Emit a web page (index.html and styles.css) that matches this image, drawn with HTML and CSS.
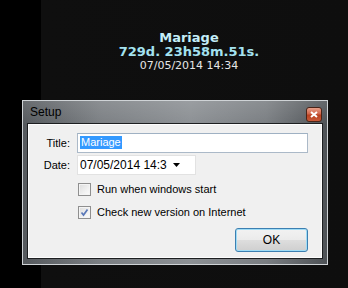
FILE: index.html
```html
<!DOCTYPE html>
<html>
<head>
<meta charset="utf-8">
<link rel="stylesheet" href="styles.css">
<title>Countdown</title>
</head>
<body>
<div class="desk">
  <div class="clock">
    <div class="clock-title">Mariage</div>
    <div class="clock-count">729d. 23h58m.51s.</div>
    <div class="clock-date">07/05/2014 14:34</div>
  </div>

  <div class="window">
    <div class="titlebar">
      <span class="caption">Setup</span>
      <span class="close">
        <svg width="8" height="7" viewBox="0 0 8 7"><path d="M1 1 L7 6 M7 1 L1 6" stroke="#fff" stroke-width="2"/></svg>
      </span>
    </div>
    <div class="client">
      <div class="row">
        <span class="label">Title:</span>
        <div class="textbox"><span class="sel">Mariage</span></div>
      </div>
      <div class="row">
        <span class="label">Date:</span>
        <div class="combo">
          <span>07/05/2014 14:3</span>
          <svg class="arrow" width="7" height="4" viewBox="0 0 7 4"><path d="M0 0 H7 L3.5 4 Z" fill="#000"/></svg>
        </div>
      </div>
      <div class="check first">
        <span class="box"></span>
        <span>Run when windows start</span>
      </div>
      <div class="check">
        <span class="box">
          <svg width="11" height="11" viewBox="0 0 11 11"><path d="M2.5 5.5 L4.5 8 L8.5 2.5" fill="none" stroke="#5a78b8" stroke-width="1.7"/></svg>
        </span>
        <span>Check new version on Internet</span>
      </div>
      <div class="actions">
        <span class="ok">OK</span>
      </div>
    </div>
  </div>
</div>
</body>
</html>
```

FILE: styles.css
```css
html, body { margin: 0; padding: 0; }

body {
  width: 348px;
  height: 288px;
  overflow: hidden;
  background: linear-gradient(90deg, #000 0, #000 41px, #0f0f0f 41px, #0e0e0e 100%);
  font-family: "Liberation Sans", Arial, sans-serif;
  font-size: 11px;
}

.desk { padding-top: 31px; }

/* countdown text on the desktop */
.clock {
  padding-left: 30px;
  text-align: center;
  font-family: "DejaVu Sans", Verdana, sans-serif;
}
.clock-title {
  font-weight: bold;
  font-size: 13px;
  line-height: 14px;
  color: #c4eef8;
}
.clock-count {
  font-weight: bold;
  font-size: 13px;
  line-height: 14px;
  color: #a4e2f0;
}
.clock-date {
  font-size: 11px;
  line-height: 13px;
  color: #e6e6e6;
}

/* setup window */
.window {
  box-sizing: border-box;
  width: 306px;
  height: 165px;
  margin: 28px 0 0 22px;
  border: 1px solid #cfd3d6;
  padding: 0 5px 6px 5px;
  background:
    linear-gradient(180deg, rgba(255,255,255,0.12) 0, rgba(255,255,255,0) 24px),
    linear-gradient(90deg, #55595d 0%, #7b7f83 25%, #8c9094 55%, #7a7e82 80%, #4e5256 100%);
}

.titlebar {
  height: 23px;
  display: flex;
  justify-content: space-between;
  align-items: flex-start;
}
.caption {
  padding-left: 2px;
  line-height: 22px;
  font-size: 12px;
  color: #000;
}
.close {
  margin-top: 6px;
  width: 16px;
  height: 15px;
  box-sizing: border-box;
  border: 1px solid #4a2418;
  border-radius: 3px;
  background: linear-gradient(180deg, #e8a08a 0%, #d0654a 45%, #b8401f 55%, #c85a38 100%);
  display: flex;
  align-items: center;
  justify-content: center;
}

.client {
  box-sizing: border-box;
  height: 134px;
  border: 1px solid #fdfdfd;
  box-shadow: 0 0 0 1px #1c1e20;
  background: #f0f0f0;
  padding: 8px 13px 0 0;
  display: flex;
  flex-direction: column;
}

.row {
  display: grid;
  grid-template-columns: 41px auto;
  column-gap: 7px;
  align-items: center;
  height: 20px;
  margin-bottom: 2px;
}
.label {
  text-align: right;
  color: #000;
}

.textbox {
  box-sizing: border-box;
  height: 20px;
  border: 1px solid #abb9c8;
  border-top-color: #9fb1c3;
  background: #fff;
  padding: 2px 0 0 2px;
}
.sel {
  display: inline-block;
  background: #3399ff;
  color: #fff;
  line-height: 13px;
  padding: 0 1px;
}

.combo {
  box-sizing: border-box;
  width: 119px;
  height: 20px;
  border: 1px solid #e2e2e2;
  background: #fff;
  display: flex;
  align-items: center;
  justify-content: space-between;
  padding: 0 15px 0 2px;
  color: #000;
  font-size: 12px;
}

.check {
  display: flex;
  align-items: center;
  height: 13px;
  margin: 10px 0 0 49px;
  line-height: 13px;
  color: #000;
}
.check.first { margin-top: 6px; }
.box {
  box-sizing: border-box;
  width: 13px;
  height: 13px;
  margin-right: 6px;
  border: 1px solid #8f8f8f;
  background: linear-gradient(135deg, #dcdcdc 0%, #f4f4f4 70%, #fbfbfb 100%);
  box-shadow: inset 0 0 0 1px #f4f4f4;
  display: flex;
  align-items: center;
  justify-content: center;
}

.actions {
  display: flex;
  justify-content: flex-end;
  margin-top: 9px;
}
.ok {
  box-sizing: border-box;
  width: 73px;
  height: 24px;
  border: 1px solid #3c7fb1;
  border-radius: 3px;
  box-shadow: inset 0 0 0 1px #9fdcf6;
  background: linear-gradient(180deg, #f2f2f2 0%, #ebebeb 48%, #dddddd 52%, #cfcfcf 100%);
  display: flex;
  align-items: center;
  justify-content: center;
  font-size: 12px;
  color: #000;
}
```
